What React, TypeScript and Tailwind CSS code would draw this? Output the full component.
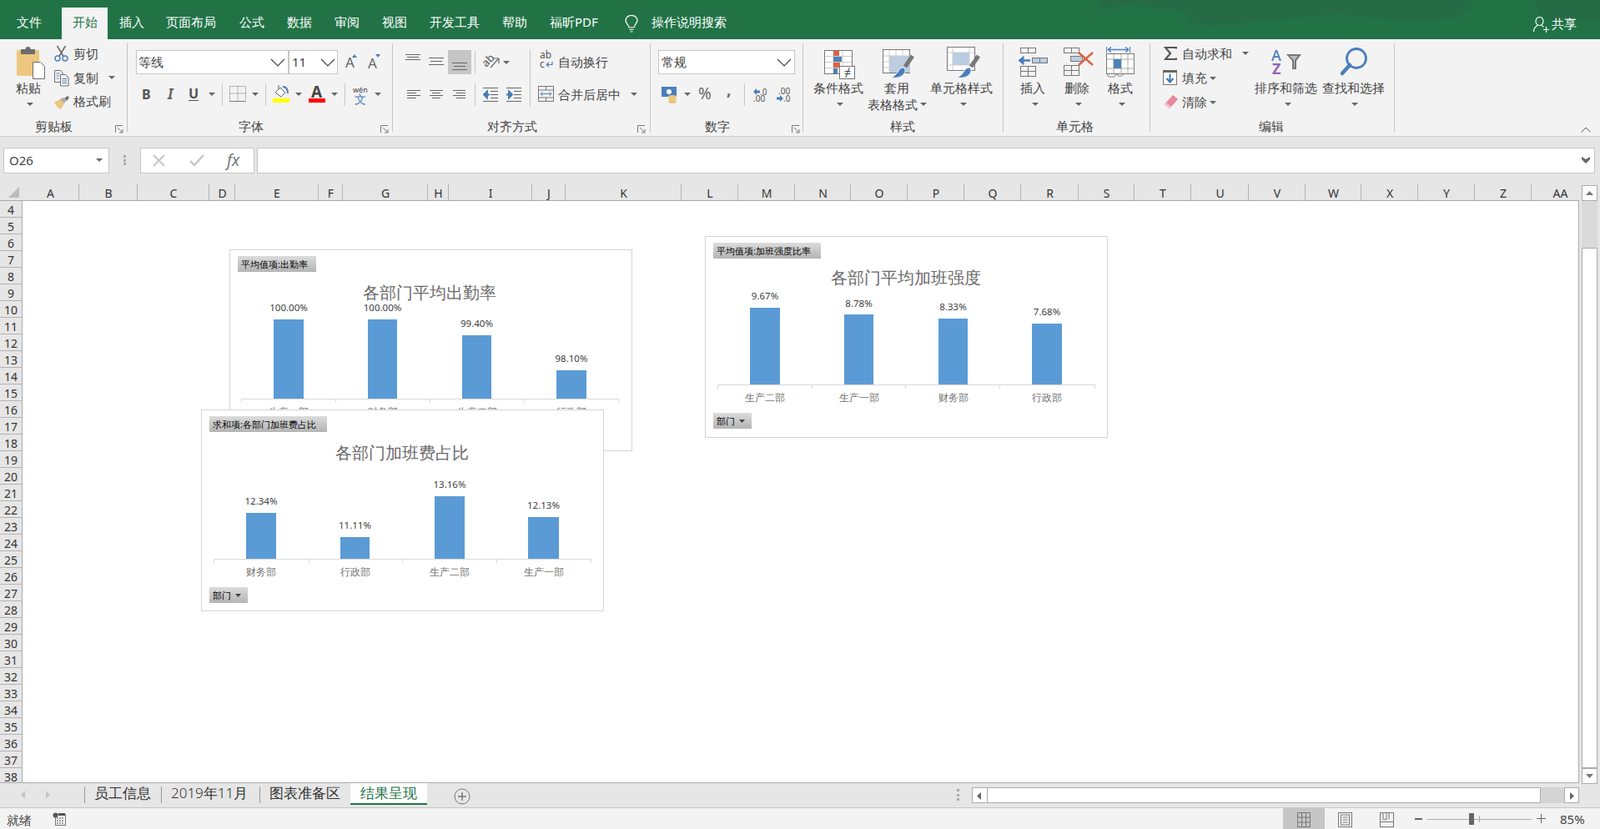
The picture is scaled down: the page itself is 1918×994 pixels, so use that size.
import React from "react";

const cols: [string, number][] = [
  ["A", 95], ["B", 165], ["C", 251], ["D", 282], ["E", 382], ["F", 411], ["G", 513], ["H", 538],
  ["I", 638], ["J", 678], ["K", 817], ["L", 885], ["M", 953], ["N", 1020], ["O", 1088], ["P", 1156],
  ["Q", 1224], ["R", 1293], ["S", 1360], ["T", 1428], ["U", 1497], ["V", 1565], ["W", 1632], ["X", 1700],
  ["Y", 1768], ["Z", 1836], ["AA", 1905],
];
const rows = Array.from({ length: 35 }, (_, i) => i + 4);

const tabs = [
  { label: "文件", left: "left-[20px]" },
  { label: "插入", left: "left-[143px]" },
  { label: "页面布局", left: "left-[199px]" },
  { label: "公式", left: "left-[287px]" },
  { label: "数据", left: "left-[344px]" },
  { label: "审阅", left: "left-[401px]" },
  { label: "视图", left: "left-[458px]" },
  { label: "开发工具", left: "left-[515px]" },
  { label: "帮助", left: "left-[602px]" },
];

function Txt({ className = "", children }: { className?: string; children: React.ReactNode }) {
  return <span className={"absolute whitespace-nowrap leading-[20px] " + className}>{children}</span>;
}

function Caret({ className = "" }: { className?: string }) {
  return (
    <svg className={"absolute w-[8px] h-[4px] " + className} viewBox="0 0 8 4">
      <path d="M0 0h8L4 4z" fill="#666" />
    </svg>
  );
}

function Chevron({ className = "" }: { className?: string }) {
  return (
    <svg className={"absolute w-[18px] h-[10px] " + className} viewBox="0 0 18 10" fill="none" stroke="#444" strokeWidth="1.2">
      <path d="M1 1l8 8 8-8" />
    </svg>
  );
}

function Launcher({ className = "" }: { className?: string }) {
  return (
    <svg className={"absolute w-[10px] h-[10px] " + className} viewBox="0 0 10 10" fill="none" stroke="#777" strokeWidth="1">
      <path d="M.5 9V.5H9" />
      <path d="M3 3l5.5 5.5M9 5v4H5" />
    </svg>
  );
}

function Lines({ className = "", rows, color = "#666" }: { className?: string; rows: number[][]; color?: string }) {
  return (
    <svg className={"absolute w-[20px] h-[20px] " + className} viewBox="0 0 20 20" stroke={color} strokeWidth="1">
      {rows.map((r, i) => (
        <path key={i} d={`M${r[0]} ${r[2] + 0.5}H${r[1]}`} />
      ))}
    </svg>
  );
}

function Brush({ className = "" }: { className?: string }) {
  return (
    <svg className={"absolute w-[30px] h-[30px] " + className} viewBox="0 0 30 30" fill="none">
      <path d="M28 2l-9 13" stroke="#777" strokeWidth="5" />
      <path d="M17 16c-3 0-5 2-6 4-2 3-5 7-9 8 6 1 13 0 16-5 1-2 2-5-1-7z" fill="#4a7ebb" stroke="#f3f3f3" />
    </svg>
  );
}

type Bar = { name: string; value: string; x: number; w: number; top: number; labelY: number };

function Chart({
  left, top, chip, chipWidth, title, titleX, titleY, bars, axis, axisY, catY, filterY, filterWidth, z,
}: {
  left: number; top: number; chip: string; chipWidth: number; title: string; titleX: number; titleY: number;
  bars: Bar[]; axis: number[]; axisY: number; catY: number; filterY: number; filterWidth: number; z: string;
}) {
  const ax0 = axis[0];
  const ax1 = axis[axis.length - 1];
  // children sit inside the 1px border
  const ox = left + 1;
  const oy = top;
  return (
    <div
      className={"absolute w-[483px] h-[242px] bg-white border border-[#d4d4d4] " + z}
      style={{ left, top }}
    >
      <div
        className="absolute left-[9px] top-[7px] h-[19px] pl-[4px] text-[11px] leading-[19px] text-black bg-gradient-to-b from-[#dcdcdc] to-[#b4b4b4] whitespace-nowrap"
        style={{ width: chipWidth }}
      >
        {chip}
      </div>
      <div
        className="absolute text-[20px] leading-[28px] text-[#6a6a6a] font-light whitespace-nowrap -translate-x-1/2"
        style={{ left: titleX - ox, top: titleY - oy - 15 }}
      >
        {title}
      </div>
      {bars.map((b) => (
        <React.Fragment key={b.name}>
          <div
            className="absolute bg-[#5b9bd5]"
            style={{ left: b.x - ox, width: b.w, top: b.top - oy, height: axisY - b.top }}
          />
          <div
            className="absolute text-[11.5px] leading-[14px] text-[#404040] -translate-x-1/2 [font-family:'Liberation_Sans',sans-serif]"
            style={{ left: b.x + b.w / 2 - ox, top: b.labelY - oy - 7 }}
          >
            {b.value}
          </div>
          <div
            className="absolute text-[12.25px] leading-[16px] text-[#707070] font-light -translate-x-1/2 whitespace-nowrap"
            style={{ left: b.x + b.w / 2 - ox, top: catY - oy - 8 }}
          >
            {b.name}
          </div>
        </React.Fragment>
      ))}
      <div
        className="absolute h-px bg-[#d9d9d9]"
        style={{ left: ax0 - ox, width: ax1 - ax0, top: axisY - oy }}
      />
      {axis.map((a) => (
        <div key={a} className="absolute w-px h-[5px] bg-[#d9d9d9]" style={{ left: a - ox, top: axisY - oy }} />
      ))}
      <div
        className="absolute left-[9px] h-[19px] pl-[4px] text-[11px] leading-[19px] text-black bg-gradient-to-b from-[#dcdcdc] to-[#b4b4b4]"
        style={{ top: filterY - oy - 1, width: filterWidth }}
      >
        部门
        <svg className="absolute right-[8px] top-[8px] w-[7px] h-[4px]" viewBox="0 0 7 4">
          <path d="M0 0h7L3.5 4z" fill="#444" />
        </svg>
      </div>
    </div>
  );
}

export default function App() {
  return (
    <div className="relative w-[1918px] h-[994px] overflow-hidden bg-white text-[15px] text-[#444] [font-family:'Noto_Sans_CJK_SC','Liberation_Sans',sans-serif]">
      {/* title bar */}
      <div className="absolute left-0 top-0 w-full h-[47px] bg-[#217346] text-white">
        <svg className="absolute left-0 top-0 w-[1918px] h-[47px]" viewBox="0 0 1918 47">
          <path
            d="M1319 13c14-4 28-8 41-6 20 3 48 2 61 8 3 7 4 11 8 12 10 3 22 4 33 3 24-2 50-6 73-7 24-1 46-5 69-6 27 2 55 7 82 6 20 0 48 0 61-3 12-4 17-12 17-20H1319z"
            fill="#256b46"
          />
          <path d="M1841 0c0 5 0 9 4 13 4 5 9 9 17 11 18 2 37 2 56 0V0z" fill="#256b46" />
        </svg>
        {tabs.map((t) => (
          <Txt key={t.label} className={"top-[16px] " + t.left}>
            {t.label}
          </Txt>
        ))}
        <div className="absolute left-[74px] top-[9px] w-[55px] h-[38px] bg-[#f3f3f3] text-[#217346] text-center leading-[35px]">
          开始
        </div>
        <Txt className="left-[659px] top-[16px]">福昕PDF</Txt>
        <svg className="absolute left-[749px] top-[18px] w-[16px] h-[21px]" viewBox="0 0 16 21" fill="none" stroke="#fff" strokeWidth="1.2">
          <path d="M5 15c0-3-4-5-4-8.500a7 6 0 0 1 14 0C15 10 11 12 11 15z" />
          <path d="M5.500 17.500h5M6.500 20h3" />
        </svg>
        <Txt className="left-[781px] top-[16px]">操作说明搜索</Txt>
        <svg className="absolute left-[1838px] top-[20px] w-[20px] h-[19px]" viewBox="0 0 20 19" fill="none" stroke="#fff" strokeWidth="1.1">
          <ellipse cx="7.500" cy="5.500" rx="4.500" ry="5" />
          <path d="M.5 18c0-4 2-6 4.500-7.500M10 10.500c1 .5 2 1.200 2.500 2M15.500 12v7M12 15.500h7" />
        </svg>
        <Txt className="left-[1860px] top-[18px]">共享</Txt>
      </div>

      {/* ribbon */}
      <div className="absolute left-0 top-[47px] w-full h-[117px] bg-[#f3f3f3] border-b border-[#cfcfcf]" />
      {[152, 470, 779, 962, 1202, 1378, 1671].map((x) => (
        <div key={x} className="absolute top-[52px] h-[106px] w-px bg-[#c4c4c4]" style={{ left: x }} />
      ))}

      {/* clipboard */}
      <svg className="absolute left-[20px] top-[55px] w-[35px] h-[40px]" viewBox="0 0 35 40">
        <rect x="0" y="5" width="27" height="31" rx="2" fill="#edc67f" />
        <path d="M5 4h5.500a3 3 0 0 1 6 0H22v6H5z" fill="#6d6d6d" />
        <path d="M19.500 19.500h9l5 5v15h-14z" fill="#fff" stroke="#6f6f6f" />
      </svg>
      <Txt className="left-[19px] top-[95px]">粘贴</Txt>
      <Caret className="left-[32px] top-[123px]" />
      <svg className="absolute left-[65px] top-[55px] w-[17px] h-[19px]" viewBox="0 0 17 19" fill="none">
        <path d="M3.500 0l7.500 12.500M13.500 0L6 12.500" stroke="#6a6a6a" strokeWidth="1.6" />
        <circle cx="4" cy="15" r="3" stroke="#4a7ebb" strokeWidth="1.400" />
        <circle cx="13" cy="15" r="3" stroke="#4a7ebb" strokeWidth="1.400" />
      </svg>
      <Txt className="left-[88px] top-[54px]">剪切</Txt>
      <svg className="absolute left-[65px] top-[84px] w-[18px] h-[20px]" viewBox="0 0 18 20" fill="none">
        <path d="M7 14.500H.5V.5h7l2.500 2.500v2" stroke="#6f6f6f" />
        <path d="M2.500 4h4M2.500 7h3M2.500 10h3" stroke="#4a7ebb" />
        <path d="M7.500 5.500h6l3.500 3.500v10H7.500z" fill="#f3f3f3" stroke="#6f6f6f" />
        <path d="M9.500 10.500h5.500M9.500 13h5.500M9.500 15.500h5.500" stroke="#4a7ebb" />
      </svg>
      <Txt className="left-[88px] top-[83px]">复制</Txt>
      <Caret className="left-[130px] top-[91px]" />
      <svg className="absolute left-[65px] top-[115px] w-[18px] h-[16px]" viewBox="0 0 18 16">
        <path d="M0 8l7-4 5 5-4 7C5 15 2 12 0 8z" fill="#edc67f" />
        <path d="M7 4l4-2 3 4-2 3z" fill="#aaa" />
        <path d="M12 3l4-3 2 2-3 4z" fill="#6d6d6d" />
      </svg>
      <Txt className="left-[88px] top-[111px]">格式刷</Txt>
      <Txt className="left-[42px] top-[141px]">剪贴板</Txt>
      <Launcher className="left-[138px] top-[150px]" />

      {/* font */}
      <div className="absolute left-[163px] top-[60px] w-[183px] h-[29px] bg-white border border-[#c6c6c6] pl-[2px] leading-[27px]">等线</div>
      <div className="absolute left-[346px] top-[60px] w-[59px] h-[29px] bg-white border border-[#c6c6c6] pl-[3px] leading-[27px]">11</div>
      <Chevron className="left-[324px] top-[70px]" />
      <Chevron className="left-[384px] top-[70px]" />
      <Txt className="left-[414px] top-[65px] text-[17px] text-[#666] [font-family:'Liberation_Sans',sans-serif]">A</Txt>
      <svg className="absolute left-[422px] top-[65px] w-[6px] h-[4px]" viewBox="0 0 6 4"><path d="M3 0l3 4H0z" fill="#4a7ebb" /></svg>
      <Txt className="left-[441px] top-[66px] text-[17px] text-[#666] [font-family:'Liberation_Sans',sans-serif]">A</Txt>
      <svg className="absolute left-[450px] top-[65px] w-[6px] h-[4px]" viewBox="0 0 6 4"><path d="M0 0h6L3 4z" fill="#4a7ebb" /></svg>

      <Txt className="left-[170px] top-[103px] text-[16px] font-bold text-[#555] [font-family:'Liberation_Sans',sans-serif]">B</Txt>
      <Txt className="left-[201px] top-[103px] text-[17px] font-bold italic text-[#666] [font-family:'Liberation_Serif',serif]">I</Txt>
      <Txt className="left-[226px] top-[102px] text-[16px] font-bold text-[#555] [font-family:'Liberation_Sans',sans-serif]">U</Txt>
      <div className="absolute left-[226px] top-[120px] w-[12px] h-px bg-[#555]" />
      <Caret className="left-[250px] top-[111px]" />
      <div className="absolute left-[266px] top-[100px] w-px h-[27px] bg-[#c6c6c6]" />
      <svg className="absolute left-[275px] top-[103px] w-[20px] h-[19px]" viewBox="0 0 20 19" fill="none" stroke="#777" strokeDasharray="1 1">
        <path d="M.5 .5h19v17M.5 .5v17M10 .5v17M.5 9h19" />
        <path d="M0 18.500h20" strokeDasharray="none" />
      </svg>
      <Caret className="left-[302px] top-[111px]" />
      <div className="absolute left-[318px] top-[100px] w-px h-[27px] bg-[#c6c6c6]" />
      <svg className="absolute left-[327px] top-[102px] w-[20px] h-[21px]" viewBox="0 0 20 21" fill="none">
        <path d="M3 9l6-6 6 6-5 5z" fill="#fff" stroke="#666" />
        <path d="M7 0v5" stroke="#666" />
        <path d="M12 2c4 0 6 3 6 8" stroke="#4a7ebb" strokeWidth="2" />
        <rect x="0" y="16" width="20" height="5" fill="#ff0" />
      </svg>
      <Caret className="left-[354px] top-[111px]" />
      <Txt className="left-[373px] top-[100px] text-[19px] font-bold text-[#444] [font-family:'Liberation_Sans',sans-serif]">A</Txt>
      <div className="absolute left-[370px] top-[118px] w-[20px] h-[5px] bg-[#f00]" />
      <Caret className="left-[397px] top-[111px]" />
      <div className="absolute left-[413px] top-[100px] w-px h-[27px] bg-[#c6c6c6]" />
      <Txt className="left-[423px] top-[98px] text-[9px] text-[#444]">wén</Txt>
      <Txt className="left-[425px] top-[109px] text-[14px] text-[#4a7ebb]">文</Txt>
      <Caret className="left-[449px] top-[111px]" />
      <Txt className="left-[286px] top-[141px]">字体</Txt>
      <Launcher className="left-[456px] top-[150px]" />

      {/* alignment */}
      <Lines className="left-[486px] top-[63px]" rows={[[0, 18, 2], [2, 16, 5], [0, 18, 8]]} />
      <Lines className="left-[514px] top-[67px]" rows={[[0, 18, 2], [2, 16, 6], [0, 18, 10]]} />
      <div className="absolute left-[537px] top-[60px] w-[28px] h-[29px] bg-[#c6c6c6]" />
      <Lines className="left-[542px] top-[73px]" rows={[[0, 18, 2], [2, 16, 6], [0, 18, 10]]} />
      <div className="absolute left-[569px] top-[61px] w-px h-[27px] bg-[#c6c6c6]" />
      <Txt className="left-[577px] top-[62px] text-[13px] font-medium text-[#666] -rotate-45 [font-family:'Liberation_Sans',sans-serif]">ab</Txt>
      <svg className="absolute left-[587px] top-[68px] w-[12px] h-[14px]" viewBox="0 0 12 14" fill="none" stroke="#666" strokeWidth="1.2">
        <path d="M1 13L10 3M5 2h6v6" />
      </svg>
      <Caret className="left-[603px] top-[73px]" />
      <Lines className="left-[488px] top-[107px]" rows={[[0, 16, 1], [0, 11, 4], [0, 16, 7], [0, 11, 10]]} />
      <Lines className="left-[515px] top-[107px]" rows={[[0, 16, 1], [3, 13, 4], [0, 16, 7], [3, 13, 10]]} />
      <Lines className="left-[543px] top-[107px]" rows={[[0, 15, 1], [4, 15, 4], [0, 15, 7], [4, 15, 10]]} />
      <div className="absolute left-[569px] top-[100px] w-px h-[27px] bg-[#c6c6c6]" />
      <svg className="absolute left-[579px] top-[104px] w-[18px] h-[18px]" viewBox="0 0 18 18" fill="none">
        <path d="M0 1.500h18M9 5.500h9M9 9.500h9M9 13.500h9M0 17.500h18" stroke="#666" />
        <path d="M1 9.500h7M1 9.500l4-4v8z" stroke="#3f76b4" strokeWidth="1.800" />
      </svg>
      <svg className="absolute left-[607px] top-[104px] w-[18px] h-[18px]" viewBox="0 0 18 18" fill="none">
        <path d="M0 1.500h18M9 5.500h9M9 9.500h9M9 13.500h9M0 17.500h18" stroke="#666" />
        <path d="M0 9.500h7M7 9.500l-4-4v8z" stroke="#3f76b4" strokeWidth="1.800" />
      </svg>
      <div className="absolute left-[635px] top-[59px] w-px h-[69px] bg-[#c6c6c6]" />
      <Txt className="left-[647px] top-[56px] text-[12px] text-[#555] [font-family:'Liberation_Sans',sans-serif]">ab</Txt>
      <Txt className="left-[647px] top-[67px] text-[12px] text-[#555] [font-family:'Liberation_Sans',sans-serif]">c</Txt>
      <svg className="absolute left-[654px] top-[73px] w-[9px] h-[9px]" viewBox="0 0 9 9" fill="none" stroke="#4a7ebb" strokeWidth="1.200">
        <path d="M8 1v3.500H1M1 4.500L4 2M1 4.500L4 7" />
      </svg>
      <Txt className="left-[669px] top-[64px]">自动换行</Txt>
      <svg className="absolute left-[645px] top-[103px] w-[19px] h-[19px]" viewBox="0 0 19 19" fill="none">
        <rect x=".5" y=".5" width="18" height="18" stroke="#777" />
        <path d="M.5 5h18M.5 14h18M9.500 .5V5M9.500 14v5" stroke="#777" />
        <path d="M3 9.500h13M3 9.500l2.500-2.500M3 9.500L5.500 12M16 9.500L13.500 7M16 9.500L13.500 12" stroke="#4a7ebb" />
      </svg>
      <Txt className="left-[669px] top-[103px]">合并后居中</Txt>
      <Caret className="left-[756px] top-[111px]" />
      <Txt className="left-[584px] top-[141px]">对齐方式</Txt>
      <Launcher className="left-[764px] top-[150px]" />

      {/* number */}
      <div className="absolute left-[789px] top-[60px] w-[164px] h-[29px] bg-white border border-[#c6c6c6] pl-[3px] leading-[27px]">常规</div>
      <Chevron className="left-[931px] top-[70px]" />
      <svg className="absolute left-[793px] top-[104px] w-[19px] h-[20px]" viewBox="0 0 19 20">
        <rect x="0" y="0" width="18" height="12" fill="#4a7ebb" />
        <circle cx="9" cy="6" r="3" fill="#fff" />
        <ellipse cx="13" cy="12" rx="5" ry="2" fill="#edc67f" />
        <ellipse cx="13" cy="15" rx="5" ry="2" fill="#edc67f" />
        <ellipse cx="13" cy="18" rx="5" ry="2" fill="#edc67f" />
      </svg>
      <Caret className="left-[820px] top-[111px]" />
      <Txt className="left-[837px] top-[102px] text-[19px] text-[#666] [font-family:'Liberation_Sans',sans-serif]">%</Txt>
      <Txt className="left-[871px] top-[97px] text-[19px] font-bold text-[#666] [font-family:'Liberation_Serif',serif]">,</Txt>
      <div className="absolute left-[892px] top-[100px] w-px h-[27px] bg-[#c6c6c6]" />
      <svg className="absolute left-[903px] top-[106px] w-[8px] h-[8px]" viewBox="0 0 8 8"><path d="M0 4l4-4v2.500h4v3H4V8z" fill="#4a7ebb" /></svg>
      <Txt className="left-[911px] top-[100px] text-[10px] text-[#555] [font-family:'Liberation_Sans',sans-serif]">.0</Txt>
      <Txt className="left-[903px] top-[108px] text-[10px] text-[#555] [font-family:'Liberation_Sans',sans-serif]">.00</Txt>
      <Txt className="left-[933px] top-[99px] text-[10px] text-[#555] [font-family:'Liberation_Sans',sans-serif]">.00</Txt>
      <svg className="absolute left-[931px] top-[114px] w-[8px] h-[8px]" viewBox="0 0 8 8"><path d="M8 4L4 0v2.500H0v3h4V8z" fill="#4a7ebb" /></svg>
      <Txt className="left-[939px] top-[108px] text-[10px] text-[#555] [font-family:'Liberation_Sans',sans-serif]">.0</Txt>
      <Txt className="left-[845px] top-[141px]">数字</Txt>
      <Launcher className="left-[949px] top-[150px]" />

      {/* styles */}
      <svg className="absolute left-[988px] top-[60px] w-[38px] h-[35px]" viewBox="0 0 38 35" fill="none">
        <rect x=".5" y=".5" width="33" height="28" fill="#fff" stroke="#777" />
        <path d="M11 1v27M22 1v27M1 7.500h32M1 14.500h32M1 21.500h32" stroke="#ccc" />
        <rect x="11" y="1" width="7" height="6" fill="#dd6344" />
        <rect x="11" y="8" width="10" height="6" fill="#4d82b8" />
        <rect x="11" y="15" width="8" height="6" fill="#dd6344" />
        <rect x="11" y="22" width="5" height="6" fill="#4d82b8" />
        <rect x="18.500" y="19.500" width="18" height="15" fill="#fff" stroke="#777" />
      </svg>
      <Txt className="left-[1012px] top-[77px] text-[14px] text-[#444] [font-family:'Liberation_Sans',sans-serif]">≠</Txt>
      <Txt className="left-[975px] top-[95px]">条件格式</Txt>
      <Caret className="left-[1003px] top-[123px]" />
      <svg className="absolute left-[1058px] top-[59px] w-[33px] h-[29px]" viewBox="0 0 33 29" fill="none">
        <rect x=".5" y=".5" width="32" height="28" fill="#fff" stroke="#777" />
        <rect x="8" y="8" width="25" height="20" fill="#b9cde5" />
        <path d="M8 1v27M16 1v27M24 1v27M1 8h32M1 15h32M1 22h32" stroke="#ccc" />
      </svg>
      <Brush className="left-[1066px] top-[65px]" />
      <Txt className="left-[1060px] top-[95px]">套用</Txt>
      <Txt className="left-[1040px] top-[115px]">表格格式</Txt>
      <Caret className="left-[1103px] top-[123px]" />
      <svg className="absolute left-[1135px] top-[56px] w-[34px] h-[29px]" viewBox="0 0 34 29" fill="none">
        <rect x=".5" y=".5" width="33" height="28" fill="#fff" stroke="#777" />
        <rect x="7" y="7" width="20" height="15" fill="#b9cde5" />
        <path d="M7 1v27M27 1v27M1 7h32M1 22h32" stroke="#ccc" />
      </svg>
      <Brush className="left-[1145px] top-[65px]" />
      <Txt className="left-[1115px] top-[95px]">单元格样式</Txt>
      <Caret className="left-[1151px] top-[123px]" />
      <Txt className="left-[1067px] top-[141px]">样式</Txt>

      {/* cells */}
      <svg className="absolute left-[1220px] top-[56px] w-[37px] h-[36px]" viewBox="0 0 37 36" fill="none" stroke="#777">
        <rect x="3.500" y="1.500" width="18" height="6" />
        <path d="M12.500 1.500v6" />
        <rect x="17.500" y="13.500" width="18" height="6" fill="#b9cde5" />
        <path d="M26.500 13.500v6" />
        <path d="M2 16.500h13" stroke="#4a7ebb" strokeWidth="2.500" />
        <path d="M1 16.500l6-5v10z" fill="#4a7ebb" stroke="#4a7ebb" />
        <rect x="3.500" y="23.500" width="18" height="12" />
        <path d="M12.500 23.500v12M3.500 29.500h18" />
      </svg>
      <Txt className="left-[1223px] top-[95px]">插入</Txt>
      <Caret className="left-[1237px] top-[123px]" />
      <svg className="absolute left-[1275px] top-[56px] w-[36px] h-[36px]" viewBox="0 0 36 36" fill="none" stroke="#777">
        <rect x=".5" y="1.500" width="18" height="6" />
        <path d="M9.500 1.500v6" />
        <rect x="8.500" y="11.500" width="14" height="6" fill="#b9cde5" />
        <rect x=".5" y="22.500" width="18" height="12" />
        <path d="M9.500 22.500v12M.5 28.500h18" />
        <path d="M18 7l17 15M35 7L18 22" stroke="#dd6344" strokeWidth="2.500" />
      </svg>
      <Txt className="left-[1276px] top-[95px]">删除</Txt>
      <Caret className="left-[1289px] top-[123px]" />
      <svg className="absolute left-[1326px] top-[55px] w-[35px] h-[39px]" viewBox="0 0 35 39" fill="none">
        <path d="M.5 1v7M28.500 1v7" stroke="#4a7ebb" />
        <path d="M2 4.500h25M2 4.500L6 1.500M2 4.500L6 7.500M27 4.500L23 1.500M27 4.500L23 7.500" stroke="#4a7ebb" strokeWidth="1.300" />
        <rect x=".5" y="9.500" width="33" height="24" fill="#fff" stroke="#777" />
        <path d="M9 10v23M18 10v23M26 10v23M1 16h33M1 27h33" stroke="#aaa" />
        <rect x="9" y="16" width="9" height="11" fill="#4d82b8" />
        <path d="M1 34l2 3h7l2-3M13 34l1 2h5l2-2" stroke="#888" />
      </svg>
      <Txt className="left-[1328px] top-[95px]">格式</Txt>
      <Caret className="left-[1341px] top-[123px]" />
      <Txt className="left-[1266px] top-[141px]">单元格</Txt>

      {/* editing */}
      <svg className="absolute left-[1395px] top-[56px] w-[16px] h-[16px]" viewBox="0 0 16 16" fill="none" stroke="#555" strokeWidth="2.200">
        <path d="M15 2.500V1H2l6 7-6 7h13v-1.500" />
      </svg>
      <Txt className="left-[1417px] top-[54px]">自动求和</Txt>
      <Caret className="left-[1489px] top-[62px]" />
      <svg className="absolute left-[1394px] top-[84px] w-[17px] h-[18px]" viewBox="0 0 17 18" fill="none">
        <rect x=".5" y=".5" width="16" height="17" fill="#fff" stroke="#777" />
        <rect x="0" y="0" width="17" height="3" fill="#666" />
        <path d="M8.500 5v9M4.500 10l4 4.500 4-4.500" stroke="#3f76b4" strokeWidth="2" />
      </svg>
      <Txt className="left-[1417px] top-[83px]">填充</Txt>
      <Caret className="left-[1450px] top-[92px]" />
      <svg className="absolute left-[1395px] top-[113px] w-[18px] h-[18px]" viewBox="0 0 18 18">
        <path d="M1 12L11 1l6 5L7 17z" fill="#e8879b" />
        <path d="M1 12l6 5 2-2-6-5z" fill="#f3c0cb" />
      </svg>
      <Txt className="left-[1417px] top-[112px]">清除</Txt>
      <Caret className="left-[1450px] top-[121px]" />
      <Txt className="left-[1524px] top-[56px] text-[18px] font-medium text-[#4a7ebb] [font-family:'Liberation_Sans',sans-serif]">A</Txt>
      <Txt className="left-[1525px] top-[72px] text-[18px] font-bold text-[#9464b8] [font-family:'Liberation_Sans',sans-serif]">Z</Txt>
      <svg className="absolute left-[1542px] top-[65px] w-[18px] h-[18px]" viewBox="0 0 18 18">
        <path d="M0 0h18l-6 8v10H7V8z" fill="#777" />
        <path d="M4 2h10l-4 5v9H9V7z" fill="#bbb" />
      </svg>
      <Txt className="left-[1504px] top-[95px]">排序和筛选</Txt>
      <Caret className="left-[1540px] top-[123px]" />
      <svg className="absolute left-[1605px] top-[56px] w-[36px] h-[36px]" viewBox="0 0 36 36" fill="none" stroke="#4a7ebb">
        <circle cx="21" cy="14" r="11.500" strokeWidth="2.800" />
        <path d="M4 32l9-10" strokeWidth="4.500" strokeLinecap="round" />
      </svg>
      <Txt className="left-[1585px] top-[95px]">查找和选择</Txt>
      <Caret className="left-[1620px] top-[123px]" />
      <Txt className="left-[1509px] top-[141px]">编辑</Txt>
      <svg className="absolute left-[1895px] top-[152px] w-[12px] h-[7px]" viewBox="0 0 12 7" fill="none" stroke="#555">
        <path d="M.5 6.500L6 1l5.500 5.500" />
      </svg>

      {/* formula bar */}
      <div className="absolute left-0 top-[164px] w-full h-[830px] bg-[#e6e6e6]" />
      <div className="absolute left-[4px] top-[177px] w-[127px] h-[31px] bg-white border border-[#c6c6c6] pl-[6px] leading-[29px] text-[15px]">O26</div>
      <Caret className="left-[115px] top-[190px]" />
      <div className="absolute left-[148px] top-[186px] w-[3px] h-[12px] flex flex-col justify-between">
        <div className="h-[3px] bg-[#aaa]" />
        <div className="h-[3px] bg-[#aaa]" />
        <div className="h-[3px] bg-[#aaa]" />
      </div>
      <div className="absolute left-[168px] top-[177px] w-[137px] h-[31px] bg-white border border-[#c6c6c6]" />
      <svg className="absolute left-[183px] top-[185px] w-[15px] h-[15px]" viewBox="0 0 15 15" fill="none" stroke="#c6c6c6" strokeWidth="2">
        <path d="M1 1l13 13M14 1L1 14" />
      </svg>
      <svg className="absolute left-[227px] top-[185px] w-[18px] h-[15px]" viewBox="0 0 18 15" fill="none" stroke="#c6c6c6" strokeWidth="2.500">
        <path d="M1 8l5 5L17 1" />
      </svg>
      <Txt className="left-[272px] top-[182px] text-[19px] italic text-[#777] [font-family:'Liberation_Serif',serif]">fx</Txt>
      <div className="absolute left-[308px] top-[177px] w-[1604px] h-[31px] bg-white border border-[#c6c6c6]" />
      <svg className="absolute left-[1896px] top-[188px] w-[10px] h-[8px]" viewBox="0 0 10 8">
        <path d="M0 0l5 3 5-3v3L5 8 0 3z" fill="#666" />
      </svg>

      {/* column headers */}
      <svg className="absolute left-[10px] top-[224px] w-[13px] h-[13px]" viewBox="0 0 13 13"><path d="M13 0v13H0z" fill="#bcbcbc" /></svg>
      <div className="absolute left-[26px] top-[220px] h-[21px] flex text-[14px] text-[#333] leading-[24px] text-center [font-family:'Liberation_Sans',sans-serif]">
        {cols.map(([name, end], i) => (
          <div
            key={name}
            className={i < cols.length - 1 ? "pl-[1px] border-r border-[#b4b4b4]" : ""}
            style={{ width: end - (i ? cols[i - 1][1] : 26) }}
          >
            {name}
          </div>
        ))}
      </div>
      <div className="absolute left-0 top-[240px] w-[1893px] h-[699px] bg-white border-t border-r border-b border-[#ababab]" />
      <div className="absolute left-0 top-[241px] w-[27px] h-[697px] overflow-hidden bg-[#e6e6e6] border-r border-[#ababab] text-[14px] text-[#333] text-center [font-family:'Liberation_Sans',sans-serif]">
        {rows.map((r) => (
          <div key={r} className="h-[20px] leading-[22px] border-b border-[#b4b4b4]">
            {r}
          </div>
        ))}
      </div>

      {/* charts */}
      <Chart
        z="z-10"
        left={275}
        top={299}
        chip="平均值项:出勤率"
        chipWidth={94}
        title="各部门平均出勤率"
        titleX={515}
        titleY={351}
        axis={[289, 402, 515, 628, 741]}
        axisY={477}
        catY={493}
        filterY={520}
        filterWidth={46}
        bars={[
          { name: "生产一部", value: "100.00%", x: 328, w: 36, top: 382, labelY: 368 },
          { name: "财务部", value: "100.00%", x: 441, w: 35, top: 382, labelY: 368 },
          { name: "生产二部", value: "99.40%", x: 554, w: 35, top: 401, labelY: 387 },
          { name: "行政部", value: "98.10%", x: 667, w: 36, top: 443, labelY: 429 },
        ]}
      />
      <Chart
        z="z-20"
        left={241}
        top={491}
        chip="求和项:各部门加班费占比"
        chipWidth={141}
        title="各部门加班费占比"
        titleX={482}
        titleY={543}
        axis={[256, 370, 482, 595, 708]}
        axisY={669}
        catY={685}
        filterY={704}
        filterWidth={46}
        bars={[
          { name: "财务部", value: "12.34%", x: 295, w: 36, top: 614, labelY: 600 },
          { name: "行政部", value: "11.11%", x: 408, w: 35, top: 643, labelY: 629 },
          { name: "生产二部", value: "13.16%", x: 521, w: 36, top: 594, labelY: 580 },
          { name: "生产一部", value: "12.13%", x: 633, w: 37, top: 619, labelY: 605 },
        ]}
      />
      <Chart
        z="z-10"
        left={845}
        top={283}
        chip="平均值项:加班强度比率"
        chipWidth={129}
        title="各部门平均加班强度"
        titleX={1086}
        titleY={333}
        axis={[860, 973, 1085, 1198, 1312]}
        axisY={460}
        catY={476}
        filterY={495}
        filterWidth={46}
        bars={[
          { name: "生产二部", value: "9.67%", x: 899, w: 36, top: 368, labelY: 354 },
          { name: "生产一部", value: "8.78%", x: 1012, w: 35, top: 376, labelY: 363 },
          { name: "财务部", value: "8.33%", x: 1125, w: 35, top: 381, labelY: 367 },
          { name: "行政部", value: "7.68%", x: 1237, w: 36, top: 387, labelY: 373 },
        ]}
      />

      {/* vertical scrollbar */}
      <div className="absolute left-[1896px] top-[222px] w-[19px] h-[717px] bg-[#dadada]" />
      <div className="absolute left-[1896px] top-[222px] w-[19px] h-[19px] bg-white border border-[#ababab]">
        <svg className="absolute left-[4px] top-[6px] w-[9px] h-[5px]" viewBox="0 0 9 5"><path d="M4.500 0L9 5H0z" fill="#777" /></svg>
      </div>
      <div className="absolute left-[1896px] top-[297px] w-[19px] h-[624px] bg-white border border-[#ababab]" />
      <div className="absolute left-[1896px] top-[921px] w-[19px] h-[19px] bg-white border border-[#ababab]">
        <svg className="absolute left-[4px] top-[6px] w-[9px] h-[5px]" viewBox="0 0 9 5"><path d="M0 0h9L4.500 5z" fill="#777" /></svg>
      </div>

      {/* sheet tabs */}
      <svg className="absolute left-[25px] top-[948px] w-[5px] h-[10px]" viewBox="0 0 5 10"><path d="M5 0v10L0 5z" fill="#c6c6c6" /></svg>
      <svg className="absolute left-[55px] top-[948px] w-[5px] h-[10px]" viewBox="0 0 5 10"><path d="M0 0v10l5-5z" fill="#c6c6c6" /></svg>
      <div className="absolute left-[101px] top-[943px] w-px h-[20px] bg-[#9a9a9a]" />
      <Txt className="left-[113px] top-[941px] text-[17px] font-light text-[#333]">员工信息</Txt>
      <div className="absolute left-[193px] top-[943px] w-px h-[20px] bg-[#9a9a9a]" />
      <Txt className="left-[205px] top-[941px] text-[17px] font-light text-[#333]">2019年11月</Txt>
      <div className="absolute left-[311px] top-[943px] w-px h-[20px] bg-[#9a9a9a]" />
      <Txt className="left-[323px] top-[941px] text-[17px] font-light text-[#333]">图表准备区</Txt>
      <div className="absolute left-[420px] top-[939px] w-[92px] h-[26px] bg-white border-b-2 border-[#217346] text-center text-[17px] font-light text-[#217346] leading-[24px]">
        结果呈现
      </div>
      <svg className="absolute left-[544px] top-[945px] w-[20px] h-[20px]" viewBox="0 0 20 20" fill="none" stroke="#777">
        <circle cx="10" cy="10" r="9" />
        <path d="M10 5v10M5 10h10" strokeWidth="1.500" />
      </svg>
      <div className="absolute left-[1147px] top-[946px] w-[3px] h-[14px] flex flex-col justify-between">
        <div className="h-[3px] bg-[#aaa]" />
        <div className="h-[3px] bg-[#aaa]" />
        <div className="h-[3px] bg-[#aaa]" />
      </div>
      <div className="absolute left-[1165px] top-[944px] w-[728px] h-[19px] bg-[#d4d4d4]" />
      <div className="absolute left-[1165px] top-[944px] w-[19px] h-[19px] bg-white border border-[#ababab]">
        <svg className="absolute left-[5px] top-[5px] w-[5px] h-[9px]" viewBox="0 0 5 9"><path d="M5 0v9L0 4.500z" fill="#666" /></svg>
      </div>
      <div className="absolute left-[1184px] top-[944px] w-[663px] h-[19px] bg-white border border-l-0 border-[#ababab]" />
      <div className="absolute left-[1875px] top-[944px] w-[18px] h-[19px] bg-white border border-[#ababab]">
        <svg className="absolute left-[6px] top-[5px] w-[5px] h-[9px]" viewBox="0 0 5 9"><path d="M0 0v9l5-4.500z" fill="#666" /></svg>
      </div>

      {/* status bar */}
      <div className="absolute left-0 top-[968px] w-full h-[26px] bg-[#f3f3f3] border-t border-[#c6c6c6]" />
      <Txt className="left-[8px] top-[973px]">就绪</Txt>
      <svg className="absolute left-[63px] top-[974px] w-[16px] h-[16px]" viewBox="0 0 16 16" fill="none">
        <rect x="3.500" y="2.500" width="12" height="13" stroke="#777" fill="#f3f3f3" />
        <circle cx="3.500" cy="3.500" r="3" fill="#555" />
        <rect x="7" y="1" width="8" height="3" fill="#555" />
        <path d="M5 7h9M5 10h9M5 13h9" stroke="#555" strokeDasharray="2 1" />
      </svg>
      <div className="absolute left-[1538px] top-[969px] w-[50px] h-[25px] bg-[#c6c6c6]" />
      <svg className="absolute left-[1555px] top-[974px] w-[16px] h-[18px]" viewBox="0 0 16 18" fill="none" stroke="#777">
        <rect x=".5" y=".5" width="15" height="17" />
        <path d="M5.500 .5v17M10.500 .5v17M.5 6h15M.5 12h15" />
      </svg>
      <svg className="absolute left-[1604px] top-[974px] w-[17px] h-[18px]" viewBox="0 0 17 18" fill="none" stroke="#777">
        <rect x=".5" y=".5" width="16" height="17" />
        <rect x="3.500" y="3" width="10" height="12" />
        <path d="M5.500 6h6M5.500 9h6M5.500 12h6" />
      </svg>
      <svg className="absolute left-[1654px] top-[974px] w-[17px] h-[18px]" viewBox="0 0 17 18" fill="none" stroke="#777">
        <rect x=".5" y=".5" width="16" height="17" />
        <path d="M.5 11.500h16M4 .5v8h4V.5M11 .5v8" />
      </svg>
      <div className="absolute left-[1696px] top-[981px] w-[9px] h-[2px] bg-[#666]" />
      <div className="absolute left-[1711px] top-[982px] w-[125px] h-px bg-[#ababab]" />
      <div className="absolute left-[1773px] top-[978px] w-px h-[8px] bg-[#ababab]" />
      <div className="absolute left-[1761px] top-[975px] w-[6px] h-[14px] bg-[#666]" />
      <div className="absolute left-[1842px] top-[981px] w-[11px] h-px bg-[#666]" />
      <div className="absolute left-[1847px] top-[976px] w-px h-[11px] bg-[#666]" />
      <Txt className="left-[1870px] top-[972px] text-[15px] [font-family:'Liberation_Sans',sans-serif]">85%</Txt>
    </div>
  );
}
